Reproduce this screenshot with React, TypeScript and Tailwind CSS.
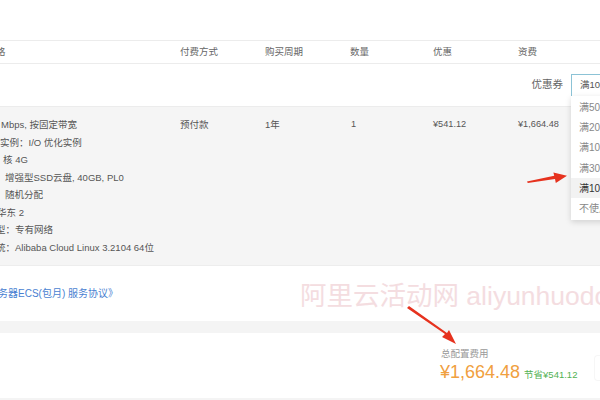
import React from "react";

const font = { fontFamily: '"Liberation Sans", "Noto Sans CJK SC", sans-serif' };

const specLines: { text: string; indent: string }[] = [
  { text: "Mbps, 按固定带宽", indent: "pl-[1px]" },
  { text: "实例：I/O 优化实例", indent: "pl-0" },
  { text: "核 4G", indent: "pl-[3px]" },
  { text: "增强型SSD云盘, 40GB, PL0", indent: "pl-[5px]" },
  { text: "随机分配", indent: "pl-[5px]" },
  { text: "华东 2", indent: "ml-[-3px]" },
  { text: "型：专有网络", indent: "ml-[-4px]" },
  { text: "统：Alibaba Cloud Linux 3.2104 64位", indent: "ml-[-4px]" },
];

const coupons = ["满500", "满200", "满100", "满300", "满100", "不使用"];

const Arrow = ({ className }: { className: string }) => (
  <svg className={className} viewBox="0 0 50 20" fill="#e6321e">
    <path d="M0 13 L34 6 L33 2 L50 6 L36 15 L35 10 L1 15 Z" />
  </svg>
);

export default function App() {
  return (
    <div className="relative w-[600px] h-[400px] overflow-hidden bg-white text-[9.5px] text-[#555]" style={font}>
      <div className="h-[40px]" />

      {/* table header */}
      <div className="flex h-[24px] items-center border-y border-[#ececec] text-[#666]">
        <div className="w-[180px] ml-[-4px]">格</div>
        <div className="w-[85px] ml-[4px]">付费方式</div>
        <div className="w-[85px]">购买周期</div>
        <div className="w-[83px]">数量</div>
        <div className="w-[85px]">优惠</div>
        <div>资费</div>
      </div>

      {/* coupon row */}
      <div className="flex h-[42px] items-center justify-end">
        <span className="mr-[8px] text-[10.5px] text-[#666]">优惠券</span>
        <div className="w-[40px] h-[23px] mr-[-11px] flex items-center pl-[8px] border border-[#8cc3d6] text-[#555]">
          满100
        </div>
      </div>

      {/* product row */}
      <div className="flex h-[159px] bg-[#f5f5f5] border-t border-[#ececec] pt-[9px] leading-[17.5px]">
        <div className="w-[180px] flex flex-col">
          {specLines.map((l, i) => (
            <div key={i} className={`whitespace-nowrap ${l.indent}`}>
              {l.text}
            </div>
          ))}
        </div>
        <div className="w-[85px]">预付款</div>
        <div className="w-[86px]">1年</div>
        <div className="w-[82px] text-[9.2px]">1</div>
        <div className="w-[85px] text-[9.2px]">¥541.12</div>
        <div className="text-[9.2px]">¥1,664.48</div>
      </div>

      {/* agreement card */}
      <div className="h-[56px] flex items-center bg-white shadow-[0_2px_3px_rgba(0,0,0,0.06)] border-t border-[#ededed]">
        <span className="ml-[-2px] text-[10px] text-[#4a7fd1] whitespace-nowrap">务器ECS(包月) 服务协议》</span>
      </div>

      <div className="h-[12px] bg-[#f4f4f4]" />

      {/* total card */}
      <div className="h-[65px] flex bg-white">
        <div className="flex flex-col pl-[440px] pt-[15px]">
          <span className="pl-[1px] text-[9.5px] leading-[12px] text-[#999]">总配置费用</span>
          <div className="flex items-baseline mt-[3px] leading-none">
            <span className="text-[18px] text-[#f0a040]">¥1,664.48</span>
            <span className="ml-[4px] text-[9.5px] text-[#52b152]">节省¥541.12</span>
          </div>
        </div>
        <div className="ml-auto mt-[22px] w-[6px] h-[26px] border-l border-y border-[#f6f6f6] rounded-l" />
      </div>
      <div className="h-[3px] bg-[#f4f4f4]" />

      {/* dropdown menu */}
      <div className="absolute left-[571px] top-[96px] w-[60px] bg-white shadow-[0_2px_6px_rgba(0,0,0,0.15)] py-[1px] text-[10px]">
        {coupons.map((c, i) => (
          <div
            key={i}
            className={`h-[20.3px] flex items-center pl-[8px] ${i === 4 ? "bg-[#f2f2f2] text-[#333]" : "text-[#888]"}`}
          >
            {c}
          </div>
        ))}
      </div>

      {/* watermark */}
      <div className="absolute left-[300px] top-[283px] text-[26.5px] leading-none whitespace-nowrap text-[#f0cfd4] opacity-70">
        阿里云活动网 aliyunhuodong
      </div>

      <Arrow className="absolute left-[527px] top-[171px] w-[40px] h-[16px]" />
      <svg className="absolute left-[405px] top-[306px] w-[52px] h-[40px]" viewBox="0 0 52 40" fill="#e6321e">
        <path d="M2 2 L40 28 L37 31 L51 38 L44 24 L42 27 L4 0 Z" />
      </svg>
    </div>
  );
}
